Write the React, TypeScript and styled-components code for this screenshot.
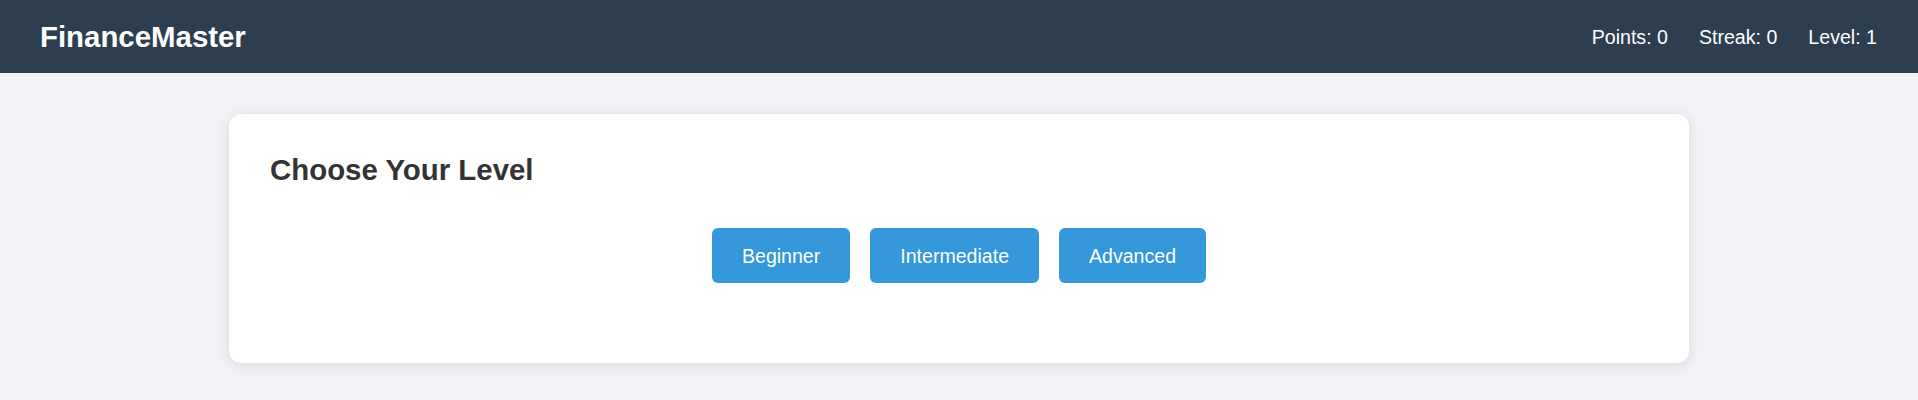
import React from "react";
import styled, { createGlobalStyle } from "styled-components";

const GlobalStyle = createGlobalStyle`
  html, body {
    margin: 0;
    padding: 0;
    background: #f0f2f5;
    font-family: "Liberation Sans", Arial, sans-serif;
  }
  * { box-sizing: border-box; }
`;

const Page = styled.div`
  min-height: 400px;
  background: #f0f2f5;
`;

const Header = styled.header`
  height: 73px;
  background: #2c3e50;
  color: #ffffff;
  display: flex;
  align-items: center;
  justify-content: space-between;
  padding: 0 41px 0 40px;
`;

const Brand = styled.h1`
  margin: 0;
  font-size: 29.4px;
  font-weight: 700;
  line-height: 33px;
`;

const Stats = styled.div`
  display: flex;
  align-items: center;
  gap: 31px;
`;

const Stat = styled.span`
  font-size: 19.6px;
  line-height: 22px;
`;

const Main = styled.main`
  display: flex;
  justify-content: center;
  padding-top: 41px;
`;

const Card = styled.section`
  width: 1460px;
  height: 249px;
  background: #ffffff;
  border-radius: 12px;
  box-shadow: 0 2px 12px rgba(0, 0, 0, 0.1);
  padding: 39px 41px;
  display: flex;
  flex-direction: column;
`;

const Title = styled.h2`
  margin: 0;
  font-size: 29.4px;
  font-weight: 700;
  line-height: 33px;
  color: #333333;
`;

const ButtonRow = styled.div`
  display: flex;
  justify-content: center;
  gap: 20px;
  margin-top: 42px;
`;

const LevelButton = styled.button`
  border: none;
  border-radius: 6px;
  background: #3498db;
  color: #ffffff;
  font-family: "Liberation Sans", Arial, sans-serif;
  font-size: 19.57px;
  line-height: 22px;
  height: 55px;
  padding: 0 30px;
  cursor: pointer;
`;

export default function App() {
  return (
    <>
      <GlobalStyle />
      <Page>
        <Header>
          <Brand>FinanceMaster</Brand>
          <Stats>
            <Stat>Points: 0</Stat>
            <Stat>Streak: 0</Stat>
            <Stat>Level: 1</Stat>
          </Stats>
        </Header>
        <Main>
          <Card>
            <Title>Choose Your Level</Title>
            <ButtonRow>
              <LevelButton>Beginner</LevelButton>
              <LevelButton>Intermediate</LevelButton>
              <LevelButton>Advanced</LevelButton>
            </ButtonRow>
          </Card>
        </Main>
      </Page>
    </>
  );
}
